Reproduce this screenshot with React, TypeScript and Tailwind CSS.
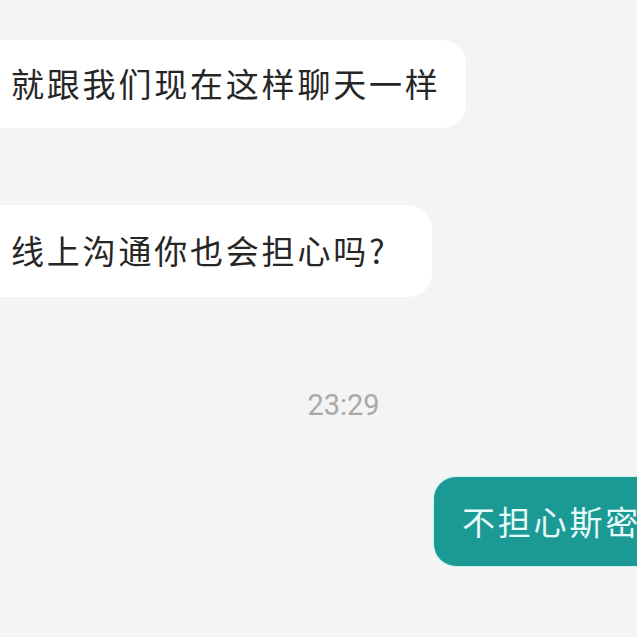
export default function App() {
  return (
    <div
      className="w-[637px] h-[637px] overflow-hidden bg-[#f4f4f4] flex flex-col"
      style={{ fontFamily: '"Noto Sans CJK SC", "Noto Sans", sans-serif' }}
    >
      <div className="mt-[40px] flex">
        <div className="h-[88px] w-[466px] bg-white rounded-r-[24px] flex items-center pl-[11px] text-[33px] tracking-[2.8px] text-[#262626] whitespace-nowrap">
          就跟我们现在这样聊天一样
        </div>
      </div>

      <div className="mt-[77px] flex">
        <div className="h-[92px] w-[432px] bg-white rounded-r-[24px] flex items-center pl-[11px] text-[33px] tracking-[2.8px] text-[#262626] whitespace-nowrap">
          线上沟通你也会担心吗?
        </div>
      </div>

      <div
        className="mt-[94px] flex justify-center pl-[50px] text-[29px] leading-none text-[#a9a9a9]"
        style={{ fontFamily: 'Roboto, "Liberation Sans", sans-serif' }}
      >
        23:29
      </div>

      <div className="mt-[57px] flex pl-[434px]">
        <div className="h-[89px] shrink-0 bg-[#1b9a95] rounded-[22px] ring-1 ring-[#c8f4f2] flex items-center pl-[28px] pr-[40px] text-[33px] tracking-[2.8px] text-[#e6fbfa] whitespace-nowrap">
          不担心斯密
        </div>
      </div>
    </div>
  );
}
